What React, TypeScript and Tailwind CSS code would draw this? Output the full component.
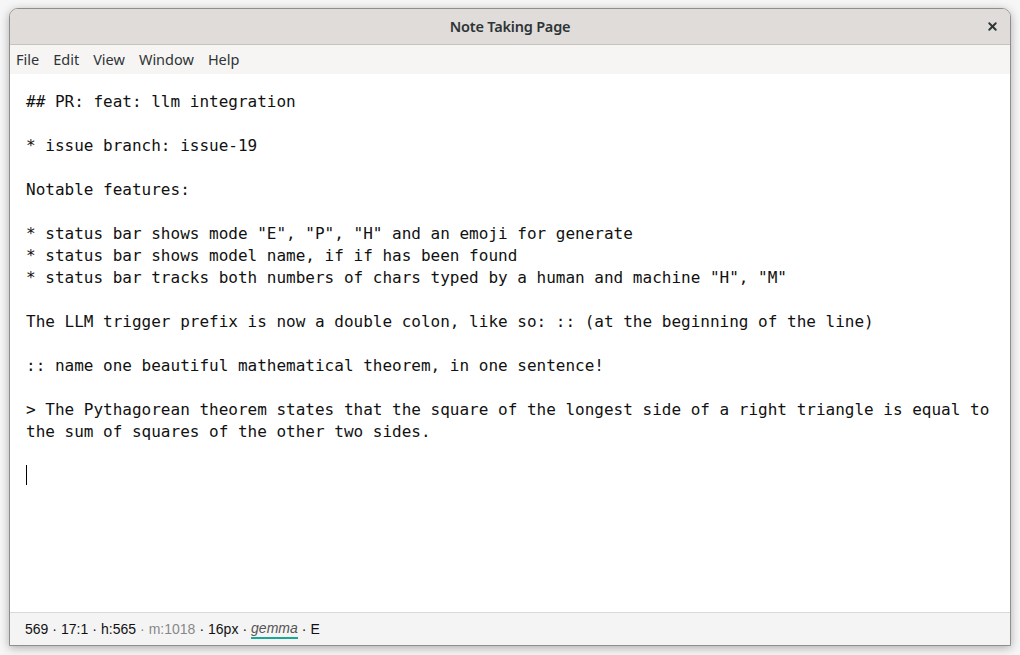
import { X } from "lucide-react";

const MENU = ["File", "Edit", "View", "Window", "Help"];

const NOTE = `## PR: feat: llm integration

* issue branch: issue-19

Notable features:

* status bar shows mode "E", "P", "H" and an emoji for generate
* status bar shows model name, if if has been found
* status bar tracks both numbers of chars typed by a human and machine "H", "M"

The LLM trigger prefix is now a double colon, like so: :: (at the beginning of the line)

:: name one beautiful mathematical theorem, in one sentence!

> The Pythagorean theorem states that the square of the longest side of a right triangle is equal to the sum of squares of the other two sides.

`;

function Dot() {
  return <span className="px-[4px]">·</span>;
}

export default function App() {
  return (
    <div className="flex h-[655px] w-[1020px] bg-[#f6f6f6] pb-[9px] pl-[9px] pr-[9px] pt-[8px]">
      <div className="flex flex-1 flex-col overflow-hidden rounded-t-[9px] border border-[#8e8e8e] bg-white shadow-[0_2px_10px_rgba(0,0,0,0.3)]">
        {/* Title bar */}
        <div className="relative flex h-[36px] shrink-0 items-center justify-center border-b border-[#c6c2be] bg-[#dfdcd9]">
          <span className="font-['Noto_Sans',sans-serif] text-[14.5px] font-semibold tracking-[-0.2px] text-[#2e3436]">
            Note Taking Page
          </span>
          <button className="absolute right-[11px] top-[11px] text-[#2e3436]">
            <X className="size-[13px]" strokeWidth={3.5} />
          </button>
        </div>

        {/* Menu bar */}
        <div className="flex h-[29px] shrink-0 items-center gap-[14px] bg-[#f6f5f4] px-[6px] font-['Noto_Sans',sans-serif] text-[14.5px] text-[#2e3436]">
          {MENU.map((m) => (
            <span key={m}>{m}</span>
          ))}
        </div>

        {/* Editor */}
        <div className="flex-1 bg-white px-[16px] pt-[17px] font-['DejaVu_Sans_Mono',monospace] text-[16px] leading-[22px] text-[#111]">
          <div className="whitespace-pre-wrap">
            {NOTE}
            <span className="inline-block h-[20px] w-px bg-black align-baseline" />
          </div>
        </div>

        {/* Status bar */}
        <div className="flex h-[33px] shrink-0 items-center border-t border-[#d9d9d9] bg-[#f4f4f4] px-[15px] font-['Liberation_Sans',sans-serif] text-[14px] text-[#111]">
          <span>569</span>
          <Dot />
          <span>17:1</span>
          <Dot />
          <span>h:565</span>
          <span className="text-[#888]">
            <Dot />
            m:1018
          </span>
          <Dot />
          <span>16px</span>
          <Dot />
          <span className="border-b-2 border-[#1aa896] italic leading-[18px] text-[#555]">gemma</span>
          <Dot />
          <span>E</span>
        </div>
      </div>
    </div>
  );
}
